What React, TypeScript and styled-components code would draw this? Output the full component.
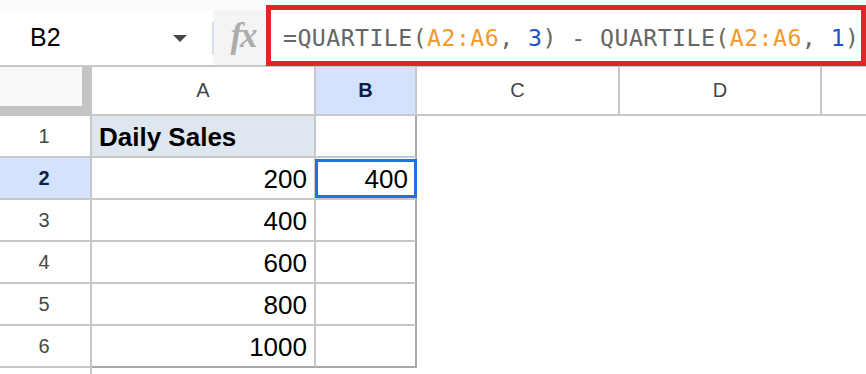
import React from "react";
import styled, { createGlobalStyle, css } from "styled-components";

const Global = createGlobalStyle`
  html, body { margin: 0; padding: 0; background: #ffffff; overflow: hidden; }
  body { font-family: "Liberation Sans", Arial, sans-serif; }
`;

const Page = styled.div`
  width: 866px;
  height: 374px;
  overflow: hidden;
  background: #ffffff;
`;

const TopBar = styled.div`
  display: flex;
  align-items: flex-start;
  height: 65px;
  background: #f9fbfd;
  border-bottom: 2px solid #c7c7c7;
`;

const NameBox = styled.div`
  display: flex;
  align-items: center;
  justify-content: space-between;
  box-sizing: border-box;
  width: 212px;
  height: 55px;
  margin-top: 10px;
  padding: 0 25px 0 30px;
  background: #ffffff;
  font-size: 25px;
  color: #000000;
`;

const Caret = styled.span`
  width: 0;
  height: 0;
  border-left: 7px solid transparent;
  border-right: 7px solid transparent;
  border-top: 7px solid #444746;
  margin-top: 2px;
`;

const Divider = styled.div`
  width: 2px;
  height: 33px;
  margin-top: 22px;
  background: #d5e1ee;
`;

const FxArea = styled.div`
  display: flex;
  align-items: center;
  justify-content: center;
  box-sizing: border-box;
  width: 52px;
  height: 55px;
  margin-top: 10px;
  padding: 0 0 4px 6px;
  background: #f4f4f4;
  font-family: "Liberation Serif", "Times New Roman", serif;
  font-style: italic;
  font-weight: bold;
  font-size: 35px;
  color: #acacac;
  letter-spacing: -2px;
`;

const FormulaBox = styled.div`
  flex: 1;
  display: flex;
  align-items: center;
  box-sizing: border-box;
  height: 61px;
  margin-top: 5px;
  padding: 3px 0 0 12px;
  background: #ffffff;
  border: 5px solid #dc2727;
  font-family: "DejaVu Sans Mono", "Liberation Mono", monospace;
  font-size: 23.2px;
  letter-spacing: 0.45px;
  color: #666666;
  white-space: pre;
`;

const Tok = styled.span<{ $kind: "range" | "num" }>`
  color: ${(p) => (p.$kind === "range" ? "#f39a2c" : "#1c56c9")};
`;

const Grid = styled.div`
  display: grid;
  grid-template-columns: 92px 224px 101px 203px 202px 1fr;
  grid-template-rows: 49px repeat(7, 42px);
`;

const Corner = styled.div`
  background: #c4c4c4;
  display: flex;
  align-items: flex-start;
`;

const CornerInner = styled.div`
  width: 82px;
  height: 39px;
  background: #f8f9fa;
`;

const headerText = css`
  display: flex;
  align-items: center;
  justify-content: center;
  box-sizing: border-box;
  font-size: 20px;
`;

const ColHeader = styled.div<{ $active?: boolean }>`
  ${headerText};
  border-right: 2px solid #c7c7c7;
  border-bottom: 2px solid #c7c7c7;
  background: ${(p) => (p.$active ? "#d3e3fd" : "#ffffff")};
  color: ${(p) => (p.$active ? "#0a1d44" : "#444746")};
  font-weight: ${(p) => (p.$active ? "bold" : "normal")};
`;

const EdgeHeader = styled.div`
  box-sizing: border-box;
  border-bottom: 2px solid #c7c7c7;
`;

const RowHeader = styled.div<{ $active?: boolean }>`
  ${headerText};
  padding-right: 2px;
  border-right: 2px solid #c7c7c7;
  border-bottom: 2px solid #c7c7c7;
  background: ${(p) => (p.$active ? "#d3e3fd" : "#ffffff")};
  color: ${(p) => (p.$active ? "#0a1d44" : "#444746")};
  font-weight: ${(p) => (p.$active ? "bold" : "normal")};
`;

const Cell = styled.div<{
  $title?: boolean;
  $edgeRight?: boolean;
  $edgeBottom?: boolean;
  $selected?: boolean;
}>`
  position: relative;
  display: flex;
  align-items: center;
  justify-content: ${(p) => (p.$title ? "flex-start" : "flex-end")};
  box-sizing: border-box;
  padding: ${(p) => (p.$title ? "2px 0 0 7px" : "2px 7px 0 0")};
  font-size: 26px;
  color: #000000;
  font-weight: ${(p) => (p.$title ? "bold" : "normal")};
  background: ${(p) => (p.$title ? "#dee7f0" : "#ffffff")};
  border-right: 2px solid ${(p) => (p.$edgeRight ? "#a8a8a8" : "#c7c7c7")};
  border-bottom: 2px solid ${(p) => (p.$edgeBottom ? "#a8a8a8" : "#c7c7c7")};
  ${(p) =>
    p.$selected &&
    css`
      &::after {
        content: "";
        position: absolute;
        top: 1px;
        left: -1px;
        right: -2px;
        bottom: 0;
        border: 3px solid #1a73e8;
      }
    `}
`;

const Empty = styled.div``;

const values = ["Daily Sales", "200", "400", "600", "800", "1000", ""];

export default function App() {
  return (
    <Page>
      <Global />
      <TopBar>
        <NameBox>
          <span>B2</span>
          <Caret />
        </NameBox>
        <Divider />
        <FxArea>fx</FxArea>
        <FormulaBox>
          {"=QUARTILE("}
          <Tok $kind="range">A2:A6</Tok>
          {", "}
          <Tok $kind="num">3</Tok>
          {") - QUARTILE("}
          <Tok $kind="range">A2:A6</Tok>
          {", "}
          <Tok $kind="num">1</Tok>
          {")"}
        </FormulaBox>
      </TopBar>
      <Grid>
        <Corner>
          <CornerInner />
        </Corner>
        <ColHeader>A</ColHeader>
        <ColHeader $active>B</ColHeader>
        <ColHeader>C</ColHeader>
        <ColHeader>D</ColHeader>
        <EdgeHeader />
        {values.map((v, i) => {
          const row = i + 1;
          const inData = row <= 6;
          return (
            <React.Fragment key={row}>
              <RowHeader $active={row === 2}>{inData ? row : ""}</RowHeader>
              {inData ? (
                <>
                  <Cell $title={row === 1} $edgeBottom={row === 6}>
                    {v}
                  </Cell>
                  <Cell $edgeRight $edgeBottom={row === 6} $selected={row === 2}>
                    {row === 2 ? "400" : ""}
                  </Cell>
                </>
              ) : (
                <>
                  <Empty />
                  <Empty />
                </>
              )}
              <Empty />
              <Empty />
              <Empty />
            </React.Fragment>
          );
        })}
      </Grid>
    </Page>
  );
}
